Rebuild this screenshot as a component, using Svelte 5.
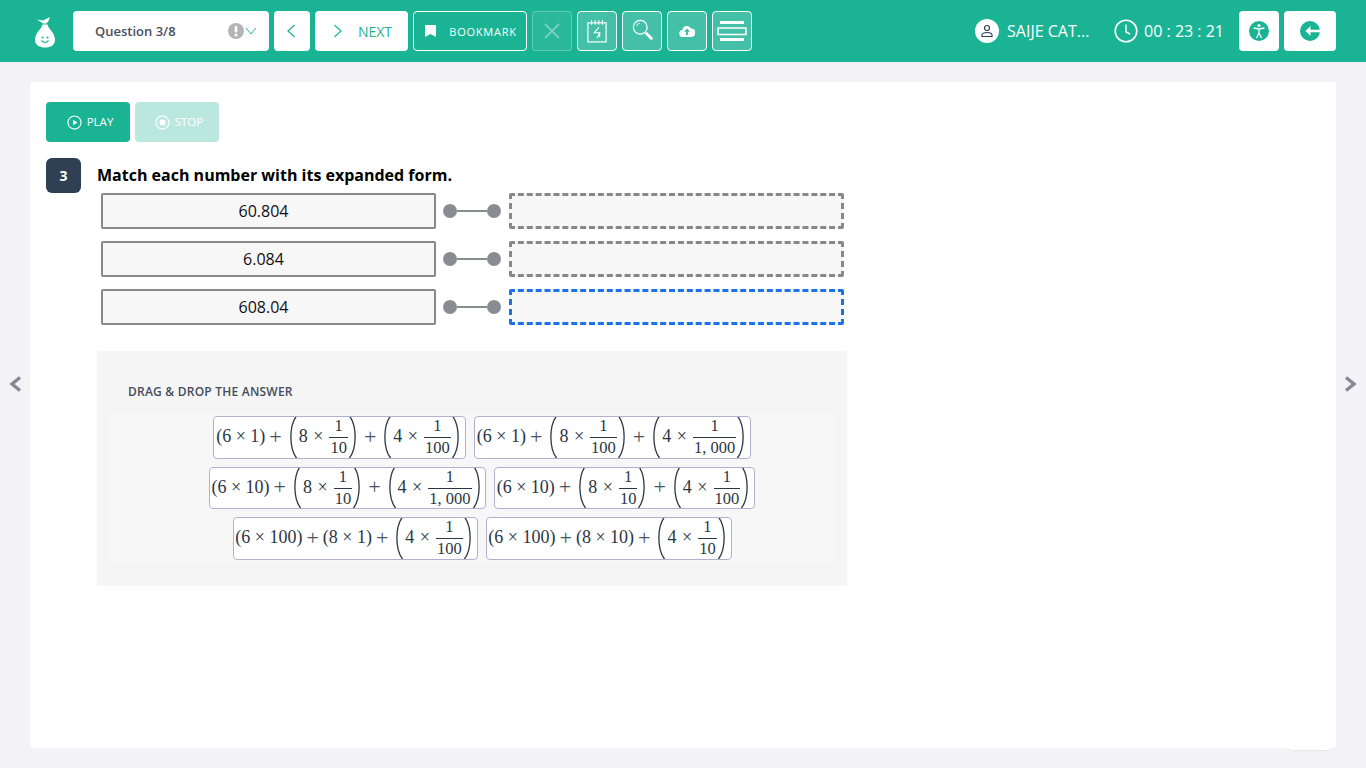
<script lang="ts">
  const rows = [
    { label: '60.804', active: false },
    { label: '6.084', active: false },
    { label: '608.04', active: true }
  ];

  const chips = [
    { w: 253, parts: [{ t: '(6 × 1)' }, { a: '8', d: '10' }, { a: '4', d: '100' }] },
    { w: 277, parts: [{ t: '(6 × 1)' }, { a: '8', d: '100' }, { a: '4', d: '1, 000' }] },
    { w: 277, parts: [{ t: '(6 × 10)' }, { a: '8', d: '10' }, { a: '4', d: '1, 000' }] },
    { w: 261, parts: [{ t: '(6 × 10)' }, { a: '8', d: '10' }, { a: '4', d: '100' }] },
    { w: 245, parts: [{ t: '(6 × 100)' }, { t: '(8 × 1)' }, { a: '4', d: '100' }] },
    { w: 246, parts: [{ t: '(6 × 100)' }, { t: '(8 × 10)' }, { a: '4', d: '10' }] }
  ];
</script>

<header class="topbar">
  <svg class="logo" viewBox="0 0 22 32" width="22" height="32" aria-hidden="true">
    <path d="M3 3.500 L9 4.500 L16 1 L14.500 5 L12.500 7.500 L9 7.500 Z" fill="#fff" />
    <path d="M8.500 8.500h5c.5 4 7.500 8 7.500 15.500 0 5-4.500 7.500-10 7.500S1 29 1 24c0-7.500 7-11.500 7.500-15.500Z" fill="#fff" />
    <circle cx="8.500" cy="21.500" r="1.100" fill="#1ab394" />
    <circle cx="13.500" cy="21.500" r="1.100" fill="#1ab394" />
    <path d="M7.500 24.500c1.500 2.500 5.500 2.500 7 0" fill="none" stroke="#1ab394" stroke-width="1.300" />
  </svg>

  <div class="select">
    <span>Question 3/8</span>
    <span class="select-icons">
      <svg viewBox="0 0 16 16" width="16" height="16" aria-hidden="true">
        <circle cx="8" cy="8" r="8" fill="#b4b4b4" />
        <rect x="6.700" y="3" width="2.600" height="6.500" rx="1" fill="#fff" />
        <circle cx="8" cy="12" r="1.500" fill="#fff" />
      </svg>
      <svg viewBox="0 0 12 8" width="12" height="8" aria-hidden="true">
        <path d="M1 1l5 6 5-6" fill="none" stroke="#1ab394" stroke-width="1" />
      </svg>
    </span>
  </div>

  <button class="white prev" aria-label="Previous">
    <svg viewBox="0 0 10 16" width="10" height="16"><path d="M8.500 2 2 8l6.500 6" fill="none" stroke="#1ab394" stroke-width="1.200" /></svg>
  </button>
  <button class="white next">
    <svg viewBox="0 0 10 16" width="10" height="16"><path d="M1.500 2 8 8l-6.500 6" fill="none" stroke="#1ab394" stroke-width="1.200" /></svg>
    <span>NEXT</span>
  </button>
  <button class="outline bookmark">
    <svg viewBox="0 0 11 12" width="11" height="12"><path d="M0 0h11v12L5.500 9 0 12Z" fill="#fff" /></svg>
    <span>BOOKMARK</span>
  </button>
  <button class="tool disabled" aria-label="Clear">
    <svg viewBox="0 0 18 18" width="18" height="18"><path d="M2 2l14 14M16 2 2 16" stroke="#fff" stroke-width="1.800" /></svg>
  </button>
  <button class="tool" aria-label="Notes">
    <svg viewBox="0 0 22 26" width="20" height="24">
      <rect x="1" y="4" width="20" height="21" fill="none" stroke="#fff" stroke-width="1.300" />
      <path d="M5 1v5M9 1v5M13 1v5M17 1v5" stroke="#fff" stroke-width="1.200" />
      <path d="M13 9l-5 6h6l-3 6M14 15v5" fill="none" stroke="#fff" stroke-width="1.200" />
    </svg>
  </button>
  <button class="tool" aria-label="Search">
    <svg class="lens" viewBox="0 0 24 24" width="22" height="22">
      <circle cx="9" cy="9" r="7.500" fill="none" stroke="#fff" stroke-width="1.400" />
      <path d="M5 7.500A4.500 4.500 0 0 1 8.500 4.500" fill="none" stroke="#fff" stroke-width="1" />
      <path d="M15 15l7 7" stroke="#fff" stroke-width="3" />
    </svg>
  </button>
  <button class="tool" aria-label="Upload">
    <svg viewBox="0 0 16 12" width="16" height="12">
      <path d="M4 12a3.500 3.500 0 0 1-.5-7A4.500 4.500 0 0 1 12 3.500 4.200 4.200 0 0 1 12.500 12Z" fill="#fff" />
      <path d="M8 3.500 5 6.800h2V10h2V6.800h2Z" fill="#3dbfa5" />
    </svg>
  </button>
  <button class="tool" aria-label="Menu">
    <svg viewBox="0 0 30 20" width="30" height="20">
      <rect x="3" y="0" width="24" height="3" fill="#fff" />
      <rect x="1" y="7" width="28" height="6.500" fill="none" stroke="#fff" stroke-width="1.500" />
      <rect x="3" y="17" width="24" height="3" fill="#fff" />
    </svg>
  </button>

  <div class="user">
    <span class="avatar">
      <svg viewBox="0 0 14 14" width="14" height="14">
        <circle cx="7" cy="4" r="2.500" fill="none" stroke="#2f4054" stroke-width="1.200" />
        <path d="M2 12.500v-1.500c0-1.500 2-2.500 5-2.500s5 1 5 2.500v1.500Z" fill="none" stroke="#2f4054" stroke-width="1.200" />
      </svg>
    </span>
    <span class="name">SAIJE CAT...</span>
  </div>
  <div class="timer">
    <svg viewBox="0 0 24 24" width="24" height="24">
      <circle cx="12" cy="12" r="10.800" fill="none" stroke="#fff" stroke-width="1.600" />
      <path d="M12 5.500V13l4 2" fill="none" stroke="#fff" stroke-width="1.400" />
    </svg>
    <span>00 : 23 : 21</span>
  </div>
  <button class="white access" aria-label="Accessibility">
    <svg viewBox="0 0 20 20" width="20" height="20">
      <circle cx="10" cy="10" r="10" fill="#1ab394" />
      <circle cx="10" cy="4.500" r="1.600" fill="#fff" />
      <path d="M4.500 7 10 8l5.500-1M10 8v4.500M10 12l-2.500 5M10 12l2.500 5" fill="none" stroke="#fff" stroke-width="1.300" />
    </svg>
  </button>
  <button class="white exit" aria-label="Exit">
    <svg viewBox="0 0 20 20" width="20" height="20">
      <circle cx="10" cy="10" r="10" fill="#1ab394" />
      <path d="M10.500 5 5.500 10l5 5V11.300h9.500V8.700h-9.500Z" fill="#fff" />
    </svg>
  </button>
</header>

<main class="page">
  <section class="card">
    <div class="audio">
      <button class="play">
        <svg viewBox="0 0 16 16" width="15" height="15">
          <circle cx="8" cy="8" r="7" fill="none" stroke="#fff" stroke-width="1.200" />
          <path d="M6.500 5v6l4.500-3Z" fill="#fff" />
        </svg>
        <span>PLAY</span>
      </button>
      <button class="stop">
        <svg viewBox="0 0 16 16" width="15" height="15">
          <circle cx="8" cy="8" r="7" fill="none" stroke="#fff" stroke-width="1.200" />
          <rect x="5" y="5" width="6" height="6" rx="1" fill="#fff" />
        </svg>
        <span>STOP</span>
      </button>
    </div>

    <div class="question">
      <div class="badge">3</div>
      <div class="body">
        <h1>Match each number with its expanded form.</h1>
        <div class="rows">
          {#each rows as row}
            <div class="row">
              <div class="source">{row.label}</div>
              <div class="connector"><i></i><b></b><i></i></div>
              <div class="target" class:active={row.active}></div>
            </div>
          {/each}
        </div>

        <div class="tray">
          <div class="tray-title">DRAG &amp; DROP THE ANSWER</div>
          <div class="choices">
            {#each chips as chip}
              <div class="chip" style="width: {chip.w}px">
                {#each chip.parts as part, i}
                  {#if i > 0}<span class="plus">+</span>{/if}
                  {#if part.t}
                    <span>{part.t}</span>
                  {:else}
                    <svg class="paren" viewBox="0 0 12 42" width="12" height="42"><path d="M10.500 0C3 10 3 32 10.500 42" /></svg>
                    <span class="term">{part.a} ×</span>
                    <span class="frac"><span class="num">1</span><span class="den">{part.d}</span></span>
                    <svg class="paren flip" viewBox="0 0 12 42" width="12" height="42"><path d="M10.500 0C3 10 3 32 10.500 42" /></svg>
                  {/if}
                {/each}
              </div>
            {/each}
          </div>
        </div>
      </div>
    </div>

    <div class="corner-tab"></div>
  </section>

  <svg class="side left" viewBox="0 0 14 16" width="14" height="16"><path d="M12 1.500 4 8l8 6.500" fill="none" stroke="#858991" stroke-width="3.400" /></svg>
  <svg class="side right" viewBox="0 0 14 16" width="14" height="16"><path d="M2 1.500 10 8l-8 6.500" fill="none" stroke="#858991" stroke-width="3.400" /></svg>
</main>

<style>
  :global(body) {
    margin: 0;
    background: #f2f2f7;
    font-family: "Open Sans", "Liberation Sans", sans-serif;
    overflow: hidden;
  }

  button {
    font-family: inherit;
    border: 0;
    padding: 0;
    display: flex;
    align-items: center;
    justify-content: center;
    height: 40px;
    border-radius: 4px;
    cursor: pointer;
  }

  .topbar {
    height: 62px;
    box-sizing: border-box;
    background: #1ab394;
    display: flex;
    align-items: center;
    padding: 0 30px 0 34px;
    gap: 5px;
  }

  .logo {
    margin-right: 12px;
    margin-top: 1px;
  }

  .select {
    width: 196px;
    height: 40px;
    box-sizing: border-box;
    background: #fff;
    border-radius: 4px;
    padding: 0 12px 0 22px;
    display: flex;
    align-items: center;
    justify-content: space-between;
    font-size: 13px;
    font-weight: 600;
    color: #4a4f60;
  }

  .select-icons {
    display: flex;
    align-items: center;
    gap: 1px;
  }

  .white {
    background: #fff;
  }

  .prev {
    width: 36px;
    padding-right: 3px;
  }

  .next {
    width: 93px;
    gap: 15px;
    padding-left: 2px;
    color: #1ab394;
    font-size: 14px;
  }

  .outline {
    background: transparent;
    box-sizing: border-box;
    border: 1px solid #fff;
    color: #fff;
  }

  .bookmark {
    width: 114px;
    gap: 13px;
    font-size: 11px;
    font-weight: 500;
    letter-spacing: 0.75px;
    padding-left: 2px;
  }

  .tool {
    width: 40px;
    box-sizing: border-box;
    border: 1px solid #fff;
    background: rgba(255, 255, 255, 0.18);
  }

  .tool.disabled {
    opacity: 0.4;
    border-color: rgba(255, 255, 255, 0.7);
  }

  .lens {
    margin: 0 0 2px 2px;
  }

  .user {
    margin-left: auto;
    display: flex;
    align-items: center;
    gap: 8px;
    color: #fff;
    font-size: 16px;
    width: 134px;
  }

  .avatar {
    width: 24px;
    height: 24px;
    border-radius: 50%;
    background: #fff;
    display: flex;
    align-items: center;
    justify-content: center;
  }

  .timer {
    display: flex;
    align-items: center;
    gap: 6px;
    color: #fff;
    font-size: 16px;
    margin-right: 10px;
  }

  .access {
    width: 40px;
  }

  .exit {
    width: 52px;
  }

  .page {
    padding: 20px 30px;
  }

  .card {
    position: relative;
    height: 666px;
    box-sizing: border-box;
    background: #fff;
    border-radius: 4px;
    padding: 20px 16px;
  }

  .audio {
    display: flex;
    gap: 5px;
  }

  .audio button {
    width: 84px;
    gap: 5px;
    padding-left: 4px;
    color: #fff;
    font-size: 11.500px;
    font-weight: 400;
  }

  .audio span {
    margin-bottom: 1px;
  }

  .play {
    background: #1ab394;
  }

  .stop {
    background: #bae8df;
  }

  .question {
    display: flex;
    gap: 16px;
    margin-top: 16px;
  }

  .badge {
    width: 35px;
    height: 35px;
    flex-shrink: 0;
    border-radius: 6px;
    background: #2f4054;
    color: #fff;
    font-size: 14px;
    font-weight: 700;
    display: flex;
    align-items: center;
    justify-content: center;
  }

  .body {
    width: 750px;
  }

  h1 {
    margin: 0;
    height: 35px;
    font-size: 16px;
    font-weight: 700;
    line-height: 35px;
    color: #000;
  }

  .rows {
    display: flex;
    flex-direction: column;
    gap: 12px;
    padding-left: 4px;
  }

  .row {
    display: flex;
    align-items: center;
    height: 36px;
  }

  .source,
  .target {
    width: 335px;
    height: 36px;
    box-sizing: border-box;
    background: #f7f7f7;
    border: 2px solid #888;
    border-radius: 2px;
  }

  .source {
    padding-right: 10px;
    text-align: center;
    font-size: 16px;
    line-height: 32px;
    color: #111;
  }

  .target {
    border-style: dashed;
    border-width: 3px;
  }

  .target.active {
    border-color: #1a73e8;
  }

  .connector {
    width: 73px;
    padding: 0 8px 0 7px;
    box-sizing: border-box;
    display: flex;
    align-items: center;
    flex-shrink: 0;
  }

  .connector i {
    width: 14px;
    height: 14px;
    border-radius: 50%;
    background: #8a8c94;
    flex-shrink: 0;
  }

  .connector b {
    flex: 1;
    height: 2px;
    background: #8a8c94;
  }

  .tray {
    margin-top: 26px;
    height: 235px;
    box-sizing: border-box;
    background: #f5f5f5;
    padding: 33px 14px 0;
  }

  .tray-title {
    padding-left: 17px;
    font-size: 12px;
    font-weight: 600;
    letter-spacing: 0.22px;
    line-height: 16px;
    color: #454c5a;
  }

  .choices {
    margin-top: 13px;
    height: 150px;
    box-sizing: border-box;
    padding: 3px 0 0 20px;
    background: #f7f7f7;
    display: flex;
    flex-wrap: wrap;
    justify-content: center;
    align-content: flex-start;
    gap: 8px;
  }

  .chip {
    height: 42.500px;
    box-sizing: border-box;
    background: #fff;
    border: 1px solid #b3b0cf;
    border-radius: 4px;
    padding: 0 1px 1px;
    overflow: hidden;
    display: flex;
    align-items: center;
    justify-content: center;
    font-family: "Liberation Serif", "Times New Roman", serif;
    font-size: 18px;
    color: #2b3644;
    white-space: pre;
  }

  .plus {
    margin: 0 4px;
    font-size: 22px;
    line-height: 1;
    color: #4a5360;
  }

  .term {
    margin: 0 6px 0 1px;
    word-spacing: 1px;
  }

  .paren {
    flex-shrink: 0;
  }

  .paren path {
    fill: none;
    stroke: #2b3644;
    stroke-width: 1.300;
  }

  .paren.flip {
    transform: scaleX(-1);
  }

  .frac {
    display: flex;
    flex-direction: column;
    align-items: center;
    font-size: 16.500px;
    line-height: 19px;
  }

  .num {
    padding-bottom: 2px;
  }

  .den {
    border-top: 1px solid #2b3644;
    padding: 0 1px;
    align-self: stretch;
    text-align: center;
  }

  .corner-tab {
    position: absolute;
    right: 5px;
    bottom: -2px;
    width: 42px;
    height: 4px;
    background: #fff;
    border-radius: 0 0 4px 4px;
    box-shadow: 0 1px 1px #e6e6ec;
  }

  .side {
    position: absolute;
    top: 376px;
  }

  .side.left {
    left: 8px;
  }

  .side.right {
    right: 8px;
  }
</style>
